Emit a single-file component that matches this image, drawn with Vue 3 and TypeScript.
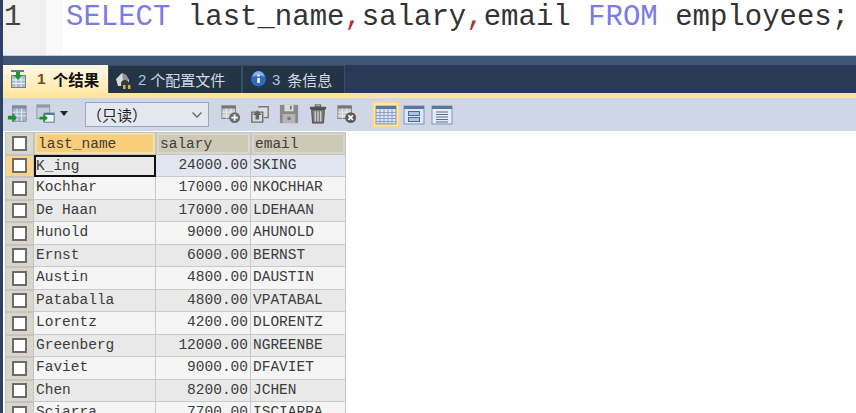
<script setup lang="ts">
interface Row { n: string; s: string; e: string }
const rows: Row[] = [
  { n: 'K_ing', s: '24000.00', e: 'SKING' },
  { n: 'Kochhar', s: '17000.00', e: 'NKOCHHAR' },
  { n: 'De Haan', s: '17000.00', e: 'LDEHAAN' },
  { n: 'Hunold', s: '9000.00', e: 'AHUNOLD' },
  { n: 'Ernst', s: '6000.00', e: 'BERNST' },
  { n: 'Austin', s: '4800.00', e: 'DAUSTIN' },
  { n: 'Pataballa', s: '4800.00', e: 'VPATABAL' },
  { n: 'Lorentz', s: '4200.00', e: 'DLORENTZ' },
  { n: 'Greenberg', s: '12000.00', e: 'NGREENBE' },
  { n: 'Faviet', s: '9000.00', e: 'DFAVIET' },
  { n: 'Chen', s: '8200.00', e: 'JCHEN' },
  { n: 'Sciarra', s: '7700.00', e: 'ISCIARRA' }
]
</script>

<template>
  <div class="page">
    <div class="editor">
      <div class="gutter">1</div>
      <div class="fold"></div>
      <div class="code"><span class="kw">SELECT</span> last_name<span class="comma">,</span>salary<span class="comma">,</span>email <span class="kw">FROM</span> employees;</div>
    </div>
    <div class="band"></div>
    <div class="tabs">
      <div class="tab active">
        <svg width="18" height="20" viewBox="0 0 18 20">
          <rect x="1" y="1" width="13" height="2" fill="#5a7d9c" />
          <rect x="1.500" y="6.500" width="14" height="12" fill="#a9bbd2" stroke="#6f8299" />
          <path d="M2 11h13M2 14.500h13M6 7v11M11 7v11" stroke="#eef2f8" />
          <path d="M6 3h4v3h2.500l-4.500 5-4.500-5H6z" fill="#1c9a2c" />
        </svg>
        <span class="num">1</span><span class="label">个结果</span>
      </div>
      <div class="tab">
        <svg width="16" height="20" viewBox="0 0 16 20">
          <path d="M0 9l6-6 4 2 3 5v6H2z" fill="#d5d9de" />
          <path d="M6 3l4 2 3 5-6 1z" fill="#8b939c" />
          <circle cx="9" cy="14" r="4" fill="#3a3a32" />
          <rect x="7" y="15" width="2.500" height="4" fill="#d4b04a" />
          <rect x="12" y="15" width="2.500" height="4" fill="#d4b04a" />
        </svg>
        <span class="num blue">2</span><span class="label">个配置文件</span>
      </div>
      <div class="tab third">
        <svg width="17" height="20" viewBox="0 0 17 20">
          <circle cx="8.500" cy="9" r="7.500" fill="#2a6cc4" />
          <path d="M2.500 7a6 6 0 0 1 12 0c-3-2-9-2-12 0z" fill="#7fb0ea" />
          <rect x="7.300" y="8" width="2.500" height="5" fill="#fff" />
          <rect x="7.300" y="4.500" width="2.500" height="2" fill="#fff" />
        </svg>
        <span class="num blue">3</span><span class="label">条信息</span>
      </div>
    </div>
    <div class="goldline"></div>
    <div class="toolbar">
      <button class="tool first" type="button" aria-label="导入">
        <svg width="20" height="20" viewBox="0 0 22 22">
          <rect x="6" y="2" width="15" height="17" fill="#a8b6ca" stroke="#7b8ba0" />
          <rect x="6" y="2" width="15" height="3" fill="#7b8ba0" />
          <path d="M6 9h15M6 13h15M11 5v14M16 5v14" stroke="#e7ecf3" />
          <path d="M1 13h5v-3l5 5-5 5v-3H1z" fill="#1c8f2a" />
        </svg>
      </button>
      <button class="tool second" type="button" aria-label="导出">
        <svg width="20" height="20" viewBox="0 0 22 22">
          <rect x="1" y="1" width="14" height="15" fill="#c3cddb" stroke="#8d9aab" />
          <rect x="1" y="1" width="14" height="3" fill="#8d9aab" />
          <rect x="9" y="10" width="11" height="10" fill="#eef2f7" stroke="#56708f" />
          <rect x="9" y="10" width="11" height="2" fill="#56708f" />
          <path d="M4 14h4v-3l5 4.500-5 4.500v-3H4z" fill="#1c8f2a" />
        </svg>
        <span class="caret"></span>
      </button>
      <div class="select">
        <span>（只读）</span>
        <svg width="12" height="8" viewBox="0 0 12 8"><path d="M1.500 1.500L6 6l4.500-4.500" fill="none" stroke="#666" stroke-width="1.300" /></svg>
      </div>
      <div class="group">
        <button class="tool" type="button" aria-label="新增">
          <svg width="20" height="20" viewBox="0 0 22 22">
            <rect x="1" y="2" width="15" height="14" fill="#c9ccd1" stroke="#7d7d7d" />
            <rect x="1" y="2" width="15" height="3" fill="#777" />
            <path d="M1 9h15M1 13h15M6 5v11M11 5v11" stroke="#eee" />
            <circle cx="15" cy="15" r="6" fill="#6b6b6b" />
            <path d="M15 11.500v7M11.500 15h7" stroke="#fff" stroke-width="2" />
          </svg>
        </button>
        <button class="tool" type="button" aria-label="复制">
          <svg width="20" height="20" viewBox="0 0 22 22">
            <path d="M9 3h11v12h-5" fill="#ddd" stroke="#777" stroke-width="1.500" />
            <path d="M2 9h12v11H2z" fill="#d9d9d9" stroke="#6b6b6b" stroke-width="1.500" />
            <path d="M8 7l5 5h-3v5H6v-5H3z" fill="#666" />
          </svg>
        </button>
        <button class="tool" type="button" aria-label="保存">
          <svg width="20" height="20" viewBox="0 0 22 22">
            <path d="M1 1h20v20H1z" fill="#8a8a8a" />
            <rect x="6" y="1" width="10" height="7" fill="#dcdcdc" />
            <rect x="12" y="2" width="2" height="4" fill="#777" />
            <rect x="4" y="11" width="14" height="10" fill="#b5b5b5" />
            <circle cx="11" cy="16" r="2" fill="#777" />
          </svg>
        </button>
        <button class="tool" type="button" aria-label="删除">
          <svg width="20" height="20" viewBox="0 0 22 22">
            <rect x="8" y="1" width="6" height="2" fill="none" stroke="#555" />
            <rect x="2" y="3" width="18" height="3" rx="1" fill="#555" />
            <path d="M4 6h14l-1 15H5z" fill="#7a7a7a" stroke="#444" />
            <path d="M8 8v11M11 8v11M14 8v11" stroke="#ddd" stroke-width="1.300" />
          </svg>
        </button>
        <button class="tool" type="button" aria-label="清除">
          <svg width="20" height="20" viewBox="0 0 22 22">
            <rect x="1" y="2" width="15" height="14" fill="#c9ccd1" stroke="#7d7d7d" />
            <rect x="1" y="2" width="15" height="3" fill="#777" />
            <path d="M1 9h15M1 13h15M6 5v11M11 5v11" stroke="#eee" />
            <circle cx="15" cy="15" r="6" fill="#5a5a5a" />
            <path d="M12.500 12.500l5 5M17.500 12.500l-5 5" stroke="#fff" stroke-width="2" />
          </svg>
        </button>
      </div>
      <div class="views">
        <button class="view on" type="button" aria-label="网格">
          <svg width="22" height="22" viewBox="0 0 22 22">
            <rect x="1" y="2" width="20" height="18" fill="#dfe6f2" stroke="#7d96ba" />
            <rect x="1" y="2" width="20" height="3" fill="#58769e" />
            <path d="M1 8.500h20M1 11.500h20M1 14.500h20M1 17.500h20M5 5v15M9 5v15M13 5v15M17 5v15" stroke="#8ba2c4" />
          </svg>
        </button>
        <button class="view" type="button" aria-label="表单">
          <svg width="22" height="22" viewBox="0 0 22 22">
            <rect x="1" y="2" width="20" height="18" fill="#dfe6f0" stroke="#7d96ba" />
            <rect x="1" y="2" width="20" height="3" fill="#58769e" />
            <rect x="5.500" y="7.500" width="11" height="4" fill="#a9c3e6" stroke="#4c6d99" />
            <rect x="5.500" y="13.500" width="11" height="4" fill="#a9c3e6" stroke="#4c6d99" />
          </svg>
        </button>
        <button class="view" type="button" aria-label="文本">
          <svg width="22" height="22" viewBox="0 0 22 22">
            <rect x="1" y="2" width="20" height="18" fill="#e6ecf5" stroke="#7d96ba" />
            <rect x="1" y="2" width="20" height="3" fill="#58769e" />
            <path d="M5 8h12M5 10.500h12M5 13h12M5 15.500h12M5 18h12" stroke="#5f6f85" />
          </svg>
        </button>
      </div>
    </div>
    <div class="results">
      <div class="grid">
        <div class="gh corner"><span class="box"></span></div>
        <div class="gh sel"><span>last_name</span></div>
        <div class="gh"><span>salary</span></div>
        <div class="gh"><span>email</span></div>
        <template v-for="(r, i) in rows" :key="r.n">
          <div class="rh" :class="{ cur: i === 0 }"><span class="box"></span></div>
          <div class="c" :class="{ alt: i % 2 === 0, focus: i === 0 }">{{ r.n }}</div>
          <div class="c right" :class="{ alt: i % 2 === 0, hl: i === 0 }">{{ r.s }}</div>
          <div class="c" :class="{ alt: i % 2 === 0, hl: i === 0 }">{{ r.e }}</div>
        </template>
      </div>
    </div>
  </div>
</template>

<style>
html, body { margin: 0; overflow: hidden; background: #fff; }
</style>

<style scoped>
.page { width: 856px; height: 413px; display: flex; flex-direction: column; overflow: hidden; background: #fff; border-left: 3px solid #2d4263; box-sizing: border-box; }
.editor { height: 56px; flex: none; display: flex; background: #fff; border-bottom: 1px solid #c8ccd2; box-sizing: border-box; font-family: "Liberation Mono", monospace; font-size: 29px; color: #333; }
.gutter { width: 43px; background: #f0f0f0; padding-left: 1px; box-sizing: border-box; line-height: 35px; color: #444; }
.fold { width: 17px; background: repeating-conic-gradient(#f4f4f4 0 25%, #fff 0 50%) 0 0 / 2px 2px; }
.code { padding-left: 3px; line-height: 35px; white-space: pre; }
.kw { color: #7b7be8; }
.comma { color: #a33; }
.band { height: 9px; flex: none; background: #3d5475; }
.tabs { height: 28px; flex: none; display: flex; background: #293a56; font-family: "Noto Sans CJK SC", sans-serif; font-size: 15px; color: #d5dce4; }
.tab { height: 28px; box-sizing: border-box; display: flex; align-items: center; gap: 6px; white-space: nowrap; background: #233445; border: 1px solid #3a4c66; border-bottom: none; padding: 0 0 0 7px; width: 134px; }
.label { margin-left: -2px; }
.tab.third { width: 103px; gap: 5px; }
.tab.third .label { margin-left: 2px; }
.tab.active { width: 105px; background: linear-gradient(#fff9e6, #ffe9aa); color: #111; font-weight: 700; font-size: 15.500px; border: none; padding-left: 7px; gap: 9px; }
.tab.active .label { margin-left: -2px; }
.num { font-family: "Liberation Sans", sans-serif; color: #7a4a10; }
.num.blue { color: #a9c4e6; }
.goldline { height: 5px; flex: none; background: #ffe6a0; }
.toolbar { height: 33px; flex: none; display: flex; align-items: center; background: #cfd6e5; padding-left: 4px; }
button { appearance: none; border: none; background: none; padding: 0; margin: 0; display: flex; align-items: center; }
.tool { width: 20px; height: 24px; justify-content: center; padding-bottom: 2px; }
.second { width: 32px; margin-left: 9px; gap: 4px; justify-content: flex-start; }
.caret { width: 0; height: 0; border-left: 4.500px solid transparent; border-right: 4.500px solid transparent; border-top: 5px solid #222; }
.select { width: 124px; height: 25px; box-sizing: border-box; margin-left: 17px; border: 1px solid #8fa9c6; background: #e3e7ee; display: flex; align-items: center; justify-content: space-between; padding: 0 5px 0 1px; font-family: "Noto Sans CJK SC", sans-serif; font-size: 15px; color: #222; }
.group { display: flex; margin-left: 12px; gap: 9px; }
.views { display: flex; margin-left: 15px; }
.view { width: 28px; height: 27px; justify-content: center; box-sizing: border-box; border: 1px solid transparent; }
.view.on { background: #ffe8a8; border: 2px solid #f6d98c; }
.results { flex: 1; min-height: 0; padding: 1px 0 0 2px; background: #fff; }
.grid { display: grid; width: 341px; grid-template-columns: 29px 122px 95px 95px; grid-auto-rows: 22.500px; background: #c9c9c9; font-family: "Liberation Mono", monospace; font-size: 14.500px; color: #3c3c3c; border-right: 1px solid #c9c9c9; box-sizing: border-box; }
.gh, .rh { background: #d9d7ca; box-sizing: border-box; border: 1px solid #c3c3c3; display: flex; align-items: center; }
.gh { padding: 2px; }
.gh > span:not(.box) { flex: 1; padding: 1px 0 0 1px; box-sizing: border-box; height: 100%; display: flex; align-items: center; background: #cdc9b6; }
.corner, .rh { justify-content: center; }
.gh.sel span { background: #f9cd7a; }
.gh.sel { background: #f3dfae; }
.rh.cur { background: #f9d68b; }
.box { display: block; width: 15px; height: 15px; box-sizing: border-box; background: #fff; border: 2px solid #6b6b6b; }
.c { background: #f5f5f5; border-right: 1px solid #c9c9c9; border-bottom: 1px solid #c9c9c9; box-sizing: border-box; line-height: 20px; padding: 0 2px; white-space: nowrap; overflow: hidden; }
.c.alt { background: #e9e9e9; }
.c.right { text-align: right; }
.c.hl { background: #e1e6f0; }
.c.focus { border: 2px solid #111; line-height: 18px; padding-left: 0; }
</style>
